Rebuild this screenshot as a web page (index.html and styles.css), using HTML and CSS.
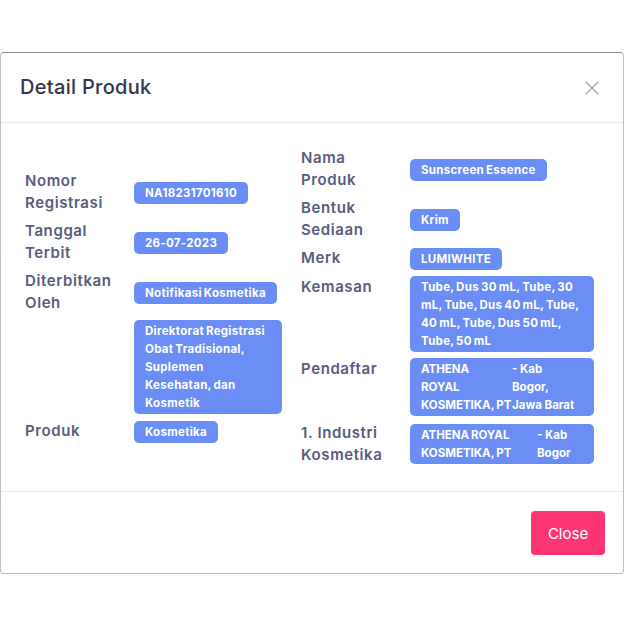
FILE: index.html
```html
<!DOCTYPE html>
<html lang="id">
<head>
  <meta charset="UTF-8">
  <meta name="viewport" content="width=device-width, initial-scale=1.0">
  <title>Detail Produk</title>
  <link rel="stylesheet" href="styles.css">
</head>
<body>
  <div class="modal">
    <div class="modal-header">
      <h5 class="modal-title">Detail Produk</h5>
      <button class="btn-x" type="button" aria-label="Close">
        <svg width="14" height="14" viewBox="0 0 14 14"><path d="M1 1L13 13M13 1L1 13" stroke="#a8a8a8" stroke-width="1.4" fill="none"/></svg>
      </button>
    </div>

    <div class="modal-body">
      <table class="detail detail-left">
        <colgroup><col class="col-label"><col class="col-value"></colgroup>
        <tr>
          <td class="label">Nomor Registrasi</td>
          <td class="value"><span class="badge">NA18231701610</span></td>
        </tr>
        <tr>
          <td class="label">Tanggal Terbit</td>
          <td class="value"><span class="badge">26-07-2023</span></td>
        </tr>
        <tr>
          <td class="label">Diterbitkan Oleh</td>
          <td class="value"><span class="badge">Notifikasi Kosmetika</span></td>
        </tr>
        <tr>
          <td class="label"></td>
          <td class="value"><span class="badge">Direktorat Registrasi Obat Tradisional, Suplemen Kesehatan, dan Kosmetik</span></td>
        </tr>
        <tr>
          <td class="label">Produk</td>
          <td class="value"><span class="badge">Kosmetika</span></td>
        </tr>
      </table>

      <table class="detail detail-right">
        <colgroup><col class="col-label"><col class="col-value"></colgroup>
        <tr>
          <td class="label">Nama Produk</td>
          <td class="value"><span class="badge">Sunscreen Essence</span></td>
        </tr>
        <tr>
          <td class="label">Bentuk Sediaan</td>
          <td class="value"><span class="badge">Krim</span></td>
        </tr>
        <tr>
          <td class="label">Merk</td>
          <td class="value"><span class="badge">LUMIWHITE</span></td>
        </tr>
        <tr>
          <td class="label">Kemasan</td>
          <td class="value"><span class="badge">Tube, Dus 30 mL, Tube, 30 mL, Tube, Dus 40 mL, Tube, 40 mL, Tube, Dus 50 mL, Tube, 50 mL</span></td>
        </tr>
        <tr>
          <td class="label">Pendaftar</td>
          <td class="value">
            <span class="badge badge-split split-narrow">
              <span>ATHENA ROYAL KOSMETIKA,&nbsp;PT</span>
              <span class="loc">- Kab Bogor, Jawa Barat</span>
            </span>
          </td>
        </tr>
        <tr>
          <td class="label">1. Industri Kosmetika</td>
          <td class="value">
            <span class="badge badge-split split-wide">
              <span>ATHENA ROYAL KOSMETIKA,&nbsp;PT</span>
              <span class="loc">- Kab Bogor</span>
            </span>
          </td>
        </tr>
      </table>
    </div>

    <div class="modal-footer">
      <button class="btn-close" type="button">Close</button>
    </div>
  </div>
</body>
</html>
```

FILE: styles.css
```css
* {
  margin: 0;
  padding: 0;
  box-sizing: border-box;
  font-family: 'Inter', 'Noto Sans', sans-serif;
}

body {
  background: #fff;
  padding-top: 52px;
}

.modal {
  width: 624px;
  background: #fff;
  border: 1px solid rgba(0, 0, 0, 0.25);
  border-top-color: #8d8d8d;
  border-radius: 4px;
}

.modal-header {
  display: flex;
  justify-content: space-between;
  align-items: center;
  padding: 20px 19px 20px 19px;
  border-bottom: 1px solid #e9ecef;
}

.modal-title {
  font-size: 20px;
  font-weight: 500;
  line-height: 29px;
  letter-spacing: 0.3px;
  color: #34354a;
}

.btn-x {
  background: none;
  border: none;
  width: 16px;
  height: 16px;
  margin-right: 4px;
  display: flex;
  align-items: center;
  justify-content: center;
}

.modal-body {
  display: flex;
  align-items: center;
  gap: 19px;
  padding: 21px 25px 22px 24px;
}

.detail {
  border-collapse: collapse;
  table-layout: fixed;
}

.detail-left {
  width: 257px;
}

.detail-left .col-label {
  width: 109px;
}

.detail-right {
  width: 293px;
}

.detail-right .col-label {
  width: 109px;
}

.detail td {
  padding: 3px 0;
}

.detail td.label {
  padding-right: 8px;
}

.label {
  vertical-align: top;
  font-size: 15px;
  font-weight: 600;
  line-height: 22px;
  letter-spacing: 0.6px;
  color: #585c7b;
}

.value {
  vertical-align: middle;
}

.badge {
  display: inline-block;
  max-width: 100%;
  padding: 2px 11px;
  border-radius: 5px;
  background: #6a8ef5;
  color: #fff;
  font-size: 11.5px;
  font-weight: 700;
  line-height: 18px;
  letter-spacing: 0.3px;
  word-spacing: -1px;
}

.badge-split {
  display: grid;
  column-gap: 5px;
  letter-spacing: 0;
}

.badge-split .loc {
  word-spacing: 0;
}

.split-narrow {
  grid-template-columns: 86px 67px;
}

.split-wide {
  grid-template-columns: 111px 1fr;
}

.modal-footer {
  display: flex;
  justify-content: flex-end;
  padding: 19px 18px 18px;
  border-top: 1px solid #e9ecef;
}

.btn-close {
  width: 74px;
  height: 44px;
  border: none;
  border-radius: 4px;
  background: #fd3673;
  color: #fff;
  font-size: 15px;
  font-weight: 400;
}
```
